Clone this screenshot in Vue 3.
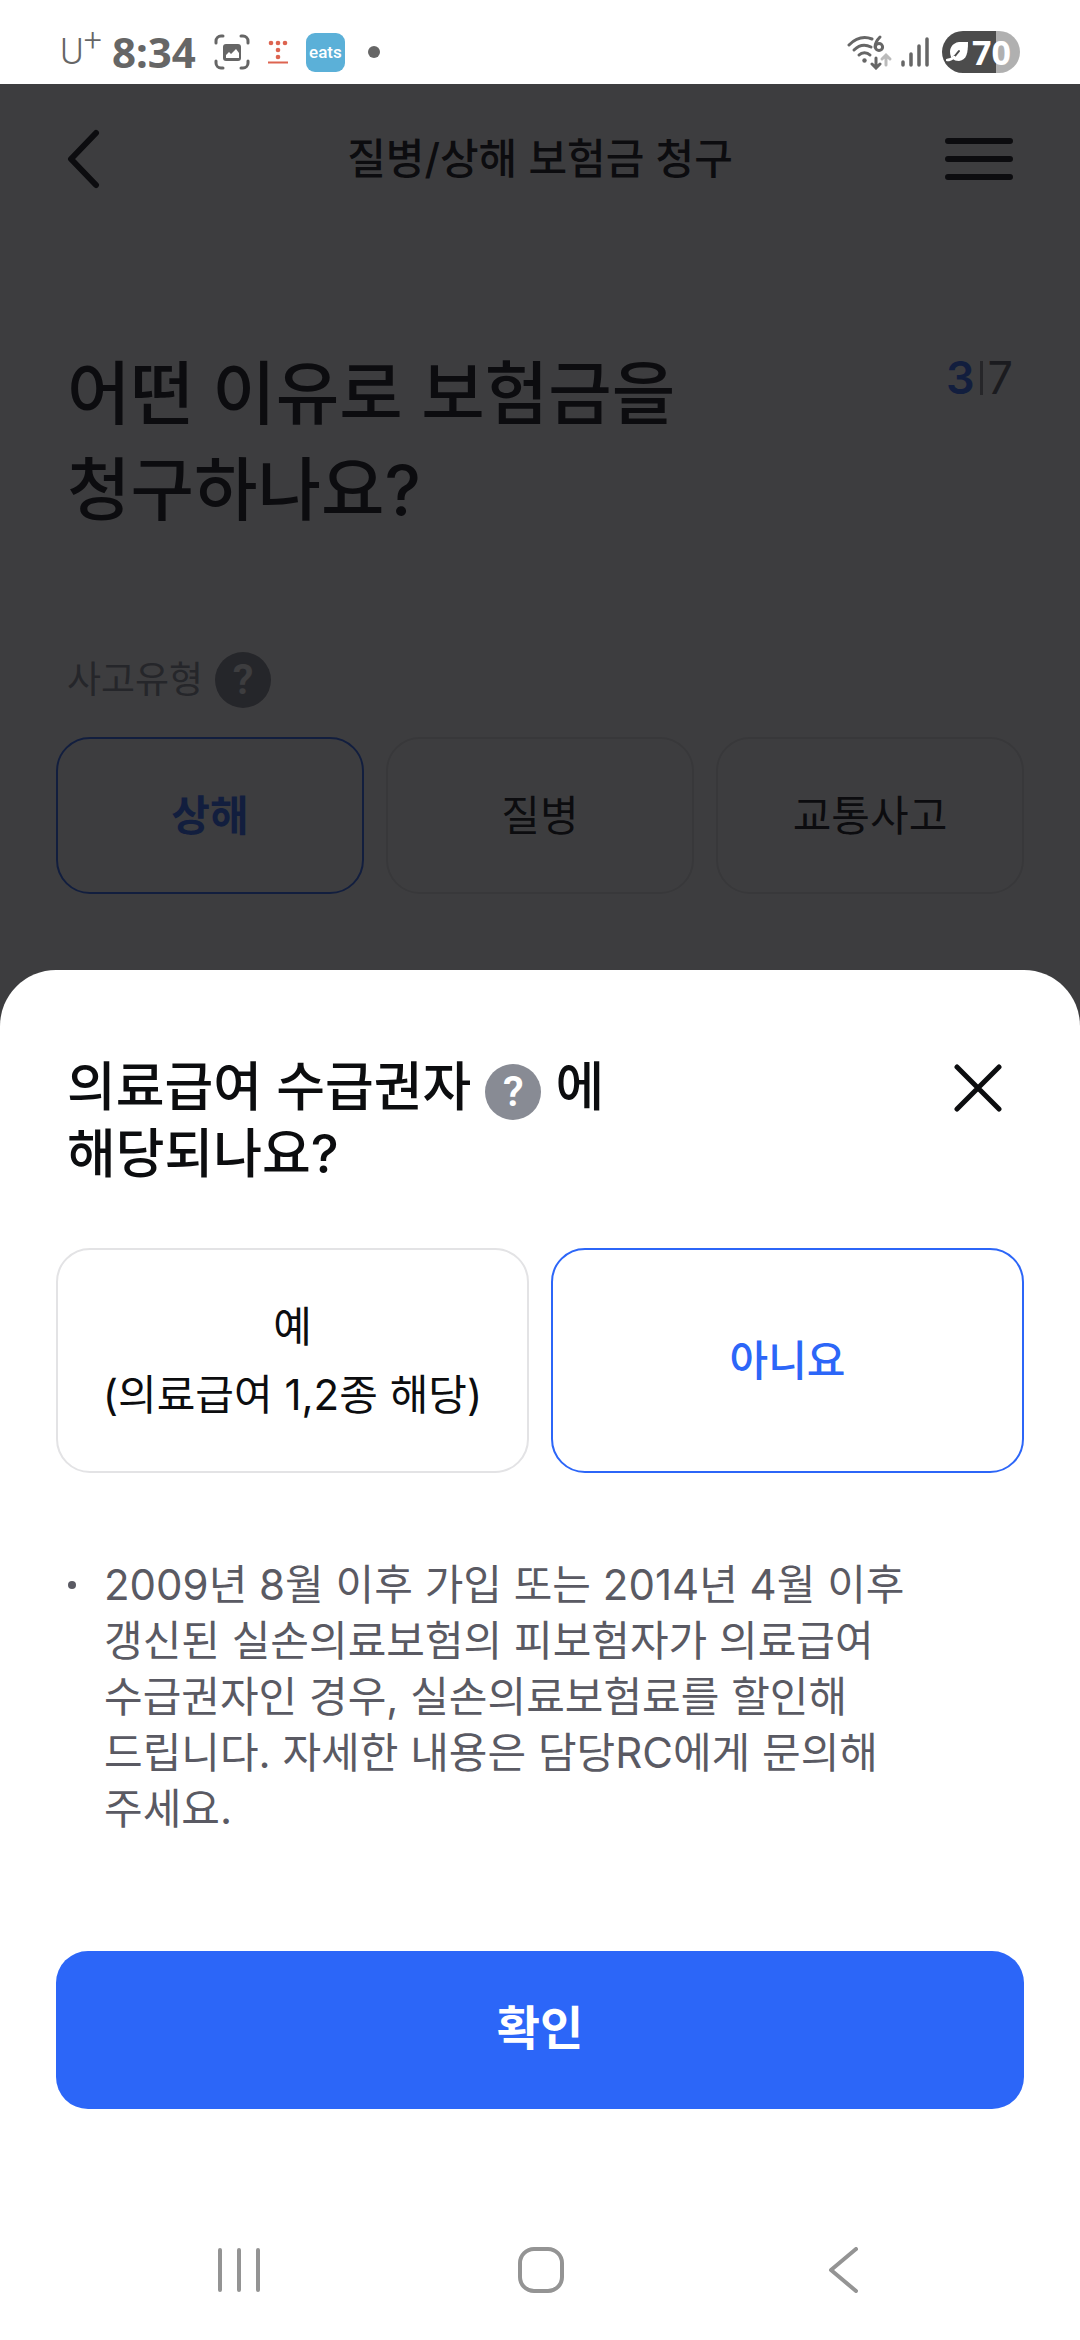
<script setup>
import { ref } from 'vue'

const accidentTypes = ['상해', '질병', '교통사고']
const accidentType = ref('상해')

const benefitOptions = [
  { value: 'yes', lines: ['예', '(의료급여 1,2종 해당)'] },
  { value: 'no', lines: ['아니요'] },
]
const benefit = ref('no')
</script>

<template>
  <div class="screen">
    <div class="status">
      <div class="status-group">
        <span class="carrier">U<sup>+</sup></span>
        <span class="clock">8:34</span>
        <svg class="capture" width="36" height="36" viewBox="0 0 36 36" aria-hidden="true">
          <g fill="none" stroke="#666" stroke-width="3" stroke-linecap="round">
            <path d="M2 9V7a5 5 0 0 1 5-5h2M27 2h2a5 5 0 0 1 5 5v2M34 27v2a5 5 0 0 1-5 5h-2M9 34H7a5 5 0 0 1-5-5v-2" />
          </g>
          <rect x="9" y="10" width="18" height="17" rx="3" fill="#666" />
          <path d="M12 24v-3l3-3 2 2 5-5 3 4v5z" fill="#fff" />
        </svg>
        <svg class="tmark" width="20" height="24" viewBox="0 0 20 24" aria-hidden="true">
          <g fill="#dd6450">
            <circle cx="3" cy="3" r="2.3" /><circle cx="10" cy="3" r="2.3" /><circle cx="17" cy="3" r="2.3" />
            <circle cx="10" cy="10" r="2.3" /><circle cx="10" cy="17" r="2.3" />
            <rect x="0" y="21.5" width="20" height="2" />
          </g>
        </svg>
        <span class="eats">eats</span>
        <span class="more-dot"></span>
      </div>
      <div class="status-group">
        <svg width="46" height="36" viewBox="0 0 46 36" aria-hidden="true">
          <g fill="none" stroke="#666" stroke-width="3" stroke-linecap="round">
            <path d="M2 11C9 4 17 2 25 5" />
            <path d="M7 16C12 11 18 10 24 13" />
            <path d="M12 21C15 18 20 18 23 21" />
            <path d="M33 3C30 6 28 9 28 13" />
            <circle cx="32" cy="13" r="3.6" />
            <path d="M29 24v9M25 30l4 4 4-4" />
            <path d="M39 31v-9M35 25l4-4 4 4" stroke="#bbb" />
          </g>
          <circle cx="17.5" cy="26.5" r="2.2" fill="#666" />
        </svg>
        <svg class="signal" width="28" height="32" viewBox="0 0 28 32" aria-hidden="true">
          <path d="M2 26v3M10 18v11M18 10v19M26 3v26" stroke="#666" stroke-width="3.5" stroke-linecap="round" />
        </svg>
        <span class="battery">
          <svg width="24" height="24" viewBox="0 0 24 24" aria-hidden="true">
            <path d="M5 17C2 9 6 3 13 2h9c0 10-1 18-9 19-3 0-5-1-6-2z" fill="#fff" />
            <path d="M5 19c3-2 6-5 8-8" fill="none" stroke="#4c4c4c" stroke-width="2" stroke-linecap="round" />
            <path d="M1 20c3 0 5-1 7-3" fill="none" stroke="#fff" stroke-width="2.5" stroke-linecap="round" />
          </svg>
          70
        </span>
      </div>
    </div>

    <div class="app">
      <div class="page">
        <header class="header">
          <button class="icon-button" aria-label="뒤로">
            <svg width="34" height="60" viewBox="0 0 34 60"><path d="M29 4L4 30l25 26" fill="none" stroke="#0c0d0f" stroke-width="6" stroke-linecap="round" stroke-linejoin="round" /></svg>
          </button>
          <h1>질병/상해 보험금 청구</h1>
          <button class="icon-button" aria-label="메뉴">
            <svg width="68" height="42" viewBox="0 0 68 42"><path d="M3 3h62M3 21h62M3 39h62" stroke="#0c0d0f" stroke-width="6" stroke-linecap="round" /></svg>
          </button>
        </header>
        <section class="question">
          <h2>어떤 이유로 보험금을<br />청구하나요?</h2>
          <p class="counter"><b>3</b><i></i><span>7</span></p>
        </section>
        <div class="field-label">
          <span id="type-label">사고유형</span>
          <button class="help" aria-label="사고유형 도움말">?</button>
        </div>
        <div class="choices strong" role="group" aria-labelledby="type-label">
          <button
            v-for="type in accidentTypes"
            :key="type"
            class="choice"
            :class="{ selected: accidentType === type }"
            :aria-pressed="accidentType === type"
            @click="accidentType = type"
          >{{ type }}</button>
        </div>
      </div>

      <div class="dim"></div>

      <section class="sheet" role="dialog" aria-labelledby="sheet-title">
        <div class="sheet-head">
          <h2 id="sheet-title">의료급여 수급권자 <button class="help" aria-label="수급권자 도움말">?</button> 에<br />해당되나요?</h2>
          <button class="icon-button close" aria-label="닫기">
            <svg width="48" height="48" viewBox="0 0 48 48"><path d="M3 3l42 42M45 3L3 45" stroke="#0c0d0f" stroke-width="5" stroke-linecap="round" /></svg>
          </button>
        </div>
        <div class="choices tall" role="group" aria-labelledby="sheet-title">
          <button
            v-for="option in benefitOptions"
            :key="option.value"
            class="choice"
            :class="{ selected: benefit === option.value }"
            :aria-pressed="benefit === option.value"
            @click="benefit = option.value"
          ><span v-for="line in option.lines" :key="line">{{ line }}</span></button>
        </div>
        <ul class="notes">
          <li>2009년 8월 이후 가입 또는 2014년 4월 이후 갱신된 실손의료보험의 피보험자가 의료급여 수급권자인 경우, 실손의료보험료를 할인해 드립니다. 자세한 내용은 담당RC에게 문의해 주세요.</li>
        </ul>
        <button class="confirm">확인</button>
      </section>
    </div>

    <nav class="navbar">
      <button class="icon-button" aria-label="최근 앱">
        <svg width="42" height="44" viewBox="0 0 42 44"><path d="M2 2v40M21 2v40M40 2v40" stroke="#949494" stroke-width="4" stroke-linecap="round" /></svg>
      </button>
      <button class="icon-button" aria-label="홈">
        <svg width="46" height="46" viewBox="0 0 46 46"><rect x="2" y="2" width="42" height="42" rx="14" fill="none" stroke="#949494" stroke-width="4" /></svg>
      </button>
      <button class="icon-button" aria-label="이전">
        <svg width="30" height="46" viewBox="0 0 30 46"><path d="M28 2L3 23l25 21" fill="none" stroke="#949494" stroke-width="4" stroke-linecap="round" stroke-linejoin="round" /></svg>
      </button>
    </nav>
  </div>
</template>

<style>
body {
  margin: 0;
  background: #fff;
}
</style>

<style scoped>
.screen {
  display: flex;
  flex-direction: column;
  min-height: 100vh;
  background: #fff;
  color: #0c0d0f;
  font-family: Inter, "Noto Sans CJK KR", sans-serif;
  word-break: keep-all;
}
h1,
h2,
p,
ul {
  margin: 0;
  padding: 0;
}
button {
  border: 0;
  padding: 0;
  background: none;
  color: inherit;
  font: inherit;
}
svg {
  display: block;
}

/* Status bar */
.status {
  display: flex;
  justify-content: space-between;
  align-items: center;
  box-sizing: border-box;
  height: 84px;
  padding: 20px 60px 0;
  color: #666;
  font-family: "Noto Sans", sans-serif;
}
.status-group {
  display: flex;
  align-items: center;
}
.carrier {
  width: 52px;
  font-family: Roboto, sans-serif;
  font-size: 36px;
  font-weight: 300;
  line-height: 40px;
}
.carrier sup {
  font-size: 32px;
  line-height: 0;
}
.clock {
  font-size: 42px;
  font-weight: 700;
  line-height: 38px;
}
.capture {
  margin-left: 18px;
}
.tmark {
  margin: 0 18px;
}
.eats {
  width: 39px;
  height: 39px;
  border-radius: 9px;
  background: #5bb0d8;
  color: #fff;
  font-family: Roboto, sans-serif;
  font-size: 17px;
  font-weight: 500;
  line-height: 38px;
  text-align: center;
}
.more-dot {
  width: 12px;
  height: 12px;
  margin-left: 23px;
  border-radius: 50%;
  background: #666;
}
.signal {
  margin: 0 13px 0 8px;
}
.battery {
  display: flex;
  align-items: center;
  gap: 2px;
  box-sizing: border-box;
  width: 78px;
  height: 42px;
  padding-left: 4px;
  border-radius: 21px;
  background: linear-gradient(to right, #4c4c4c 69%, #b0b0b0 69%);
  color: #fff;
  font-size: 34px;
  font-weight: 700;
  line-height: 38px;
}

/* Claim page */
.app {
  position: relative;
  flex: 1;
}
.page {
  padding: 0 56px;
}
.icon-button {
  display: flex;
  align-items: center;
  justify-content: center;
}
.header {
  display: flex;
  align-items: center;
  justify-content: space-between;
  height: 150px;
  padding: 0 11px;
}
.header .icon-button {
  width: 68px;
}
.header .icon-button:first-child {
  justify-content: flex-start;
}
.header h1 {
  font-size: 42px;
  font-weight: 500;
  line-height: 60px;
}
.question {
  display: flex;
  justify-content: space-between;
  align-items: flex-start;
  padding: 112px 11px 0;
}
.question h2 {
  font-size: 69px;
  font-weight: 500;
  line-height: 96px;
}
.counter {
  display: flex;
  align-items: center;
  font-size: 45px;
  line-height: 64px;
  color: #57585f;
}
.counter b {
  color: #2c66f8;
  font-weight: 600;
}
.counter i {
  width: 3px;
  height: 34px;
  margin: 0 5px;
  background: #8a8b92;
}
.counter span {
  font-weight: 400;
}
.field-label {
  display: flex;
  align-items: center;
  gap: 12px;
  margin-top: 114px;
  padding: 0 11px;
  color: #888b94;
  font-size: 37px;
  line-height: 56px;
}
.help {
  width: 56px;
  height: 56px;
  border-radius: 50%;
  background: #888b94;
  color: #fff;
  font-family: Roboto, sans-serif;
  font-size: 42px;
  font-weight: 600;
  line-height: 56px;
  text-align: center;
}
.choices {
  display: flex;
  gap: 22px;
  margin-top: 29px;
}
.choice {
  display: flex;
  flex: 1 1 0;
  flex-direction: column;
  align-items: center;
  justify-content: center;
  box-sizing: border-box;
  min-height: 157px;
  border: 2px solid #e3e3e5;
  border-radius: 34px;
  font-size: 42px;
  line-height: 68px;
}
.choice.selected {
  border-color: #2c66f8;
  color: #2c66f8;
  font-weight: 500;
}
.strong .selected {
  font-weight: 700;
}
.dim {
  position: absolute;
  inset: 0;
  background: rgba(12, 13, 15, 0.8);
}

/* Bottom sheet */
.sheet {
  position: absolute;
  right: 0;
  bottom: 0;
  left: 0;
  padding: 84px 56px 91px;
  border-radius: 56px 56px 0 0;
  background: #fff;
}
.sheet-head {
  display: flex;
  align-items: flex-start;
  justify-content: space-between;
  padding: 0 22px 0 11px;
}
.sheet-head h2 {
  font-size: 53px;
  font-weight: 500;
  line-height: 67px;
}
.sheet-head .help {
  margin: -8px 0;
  vertical-align: middle;
}
.close {
  height: 67px;
}
.tall {
  margin-top: 60px;
}
.tall .choice {
  min-height: 225px;
}
.notes {
  margin-top: 84px;
  padding: 0 12px 0 48px;
  color: #5a5a63;
  font-size: 42px;
  line-height: 56px;
  list-style: none;
}
.notes li {
  position: relative;
}
.notes li::before {
  position: absolute;
  top: 24px;
  left: -36px;
  width: 8px;
  height: 8px;
  border-radius: 50%;
  background: #5a5a63;
  content: "";
}
.confirm {
  display: block;
  box-sizing: border-box;
  width: 100%;
  height: 158px;
  margin-top: 114px;
  padding-bottom: 4px;
  border-radius: 32px;
  background: #2c66f8;
  color: #fff;
  font-size: 47px;
  font-weight: 700;
  line-height: 68px;
}

/* System navigation */
.navbar {
  display: grid;
  grid-template-columns: repeat(3, 1fr);
  align-items: center;
  height: 140px;
  padding: 0 86px 0 88px;
}
</style>
